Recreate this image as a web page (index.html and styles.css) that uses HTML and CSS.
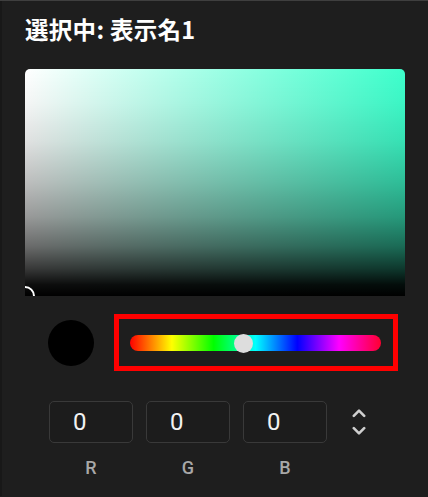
FILE: index.html
```html
<!DOCTYPE html>
<html lang="ja">
<head>
<meta charset="utf-8">
<title>Color picker</title>
<link rel="stylesheet" href="styles.css">
</head>
<body>
<div class="panel">
  <h1 class="title">選択中: 表示名1</h1>
  <div class="sv">
    <div class="sv-marker"></div>
  </div>
  <div class="controls">
    <div class="swatch"></div>
    <div class="highlight">
      <div class="hue">
        <div class="hue-thumb"></div>
      </div>
    </div>
  </div>
  <div class="fields">
    <div class="field">0</div>
    <div class="field">0</div>
    <div class="field">0</div>
    <svg class="toggle" width="14" height="30" viewBox="0 0 14 30" aria-hidden="true">
      <path d="M1.8 8.8 L7 3.6 L12.2 8.8" fill="none" stroke="#cfcfcf" stroke-width="2.6" stroke-linecap="round" stroke-linejoin="round"/>
      <path d="M1.8 21.2 L7 26.4 L12.2 21.2" fill="none" stroke="#cfcfcf" stroke-width="2.6" stroke-linecap="round" stroke-linejoin="round"/>
    </svg>
    <div class="label">R</div>
    <div class="label">G</div>
    <div class="label">B</div>
  </div>
</div>
</body>
</html>
```

FILE: styles.css
```css
html, body {
  margin: 0;
  padding: 0;
  background: #1e1e1e;
}

body {
  width: 428px;
  height: 497px;
  overflow: hidden;
  font-family: Roboto, "Noto Sans", "Noto Sans CJK JP", sans-serif;
}

.panel {
  border-top: 1px solid #3f3f3f;
  box-shadow: inset 2px 0 0 #181818;
  height: 496px;
  padding: 15px 23px 0 25px;
  box-sizing: border-box;
}

.title {
  margin: 0;
  font-family: "Noto Sans CJK JP", "Noto Sans", sans-serif;
  font-weight: 700;
  font-size: 23.5px;
  line-height: 26px;
  height: 26px;
  color: #ffffff;
  letter-spacing: 0.3px;
}

.sv {
  position: relative;
  margin-top: 27px;
  width: 380px;
  height: 227px;
  border-radius: 5px 5px 0 0;
  overflow: hidden;
  background:
    linear-gradient(to top,
      rgba(0,0,0,1) 0%,
      rgba(0,0,0,0.95) 5%,
      rgba(0,0,0,0.78) 12%,
      rgba(0,0,0,0.58) 22%,
      rgba(0,0,0,0.4) 35%,
      rgba(0,0,0,0.26) 50%,
      rgba(0,0,0,0.12) 68%,
      rgba(0,0,0,0.04) 85%,
      rgba(0,0,0,0) 100%),
    linear-gradient(to right, #ffffff 0%, #3dffcc 100%);
}

.sv-marker {
  position: absolute;
  left: -10px;
  bottom: -10px;
  width: 16px;
  height: 16px;
  border: 2px solid #ffffff;
  border-radius: 50%;
}

.controls {
  margin-top: 18px;
  display: flex;
  align-items: center;
  height: 57px;
}

.swatch {
  margin-left: 23px;
  width: 46px;
  height: 46px;
  border-radius: 50%;
  background: #000000;
}

.highlight {
  margin-left: 20px;
  width: 284px;
  height: 57px;
  box-sizing: border-box;
  border: 5px solid #ff0000;
  padding: 16px 12px 0 11px;
}

.hue {
  position: relative;
  height: 16px;
  border-radius: 8px;
  background: linear-gradient(to right, #ff0000 0%, #ffff00 16.67%, #00ff00 33.33%, #00ffff 50%, #0000ff 66.67%, #ff00ff 83.33%, #ff0030 100%);
}

.hue-thumb {
  position: absolute;
  left: 104px;
  top: -1.5px;
  width: 19px;
  height: 19px;
  border-radius: 50%;
  background: #dddddd;
}

.fields {
  margin-top: 30px;
  padding-left: 24px;
  display: grid;
  grid-template-columns: 84px 84px 84px 14px;
  grid-template-rows: 42px auto;
  column-gap: 13px;
  row-gap: 15px;
  align-items: center;
}

.field {
  height: 42px;
  box-sizing: border-box;
  border: 1px solid #393939;
  border-radius: 5px;
  background: #1c1c1c;
  color: #f2f2f2;
  font-size: 24px;
  line-height: 40px;
  padding-left: 23px;
}

.toggle {
  display: block;
  margin-left: 12px;
}

.label {
  text-align: center;
  color: #a8a8a8;
  font-size: 18px;
  font-weight: 500;
  line-height: 20px;
}
```
